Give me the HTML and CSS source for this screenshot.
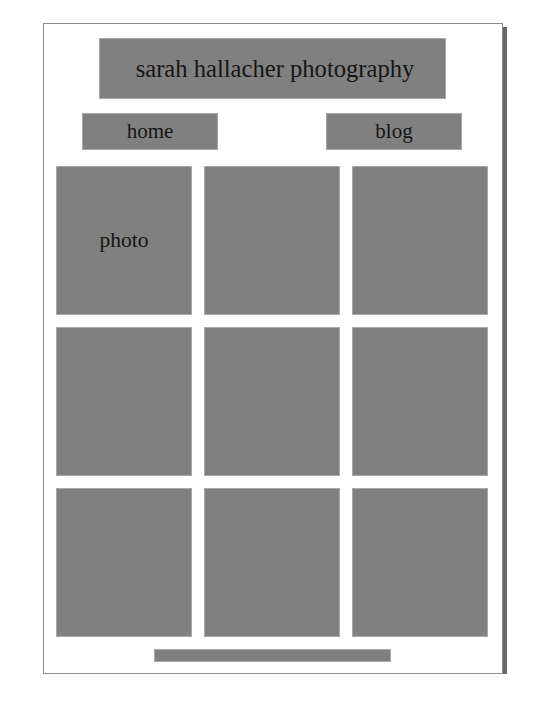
FILE: index.html
```html
<!DOCTYPE html>
<html lang="en">
<head>
<meta charset="utf-8">
<title>sarah hallacher photography</title>
<link rel="stylesheet" href="styles.css">
</head>
<body>
<div class="page">
  <header class="title">sarah hallacher photography</header>
  <nav class="nav">
    <a class="nav-item">home</a>
    <a class="nav-item">blog</a>
  </nav>
  <main class="grid">
    <div class="cell">photo</div>
    <div class="cell"></div>
    <div class="cell"></div>
    <div class="cell"></div>
    <div class="cell"></div>
    <div class="cell"></div>
    <div class="cell"></div>
    <div class="cell"></div>
    <div class="cell"></div>
  </main>
  <footer class="footer"></footer>
</div>
</body>
</html>
```

FILE: styles.css
```css
html, body {
  margin: 0;
  padding: 0;
  background: #ffffff;
}

body {
  padding: 23px 0 0 43px;
  font-family: "Liberation Serif", "Times New Roman", Times, "Nimbus Roman", "DejaVu Serif", serif;
  color: #161616;
}

.title,
.nav-item,
.cell {
  font-family: "Liberation Serif", "Times New Roman", Times, "Nimbus Roman", "DejaVu Serif", serif;
}

.page {
  box-sizing: border-box;
  width: 460px;
  height: 651px;
  border: 1px solid #8c8c8c;
  background: #ffffff;
  box-shadow: 4px 4px 0 #686868;
  display: flex;
  flex-direction: column;
}

.title {
  box-sizing: border-box;
  margin: 14px 0 0 55px;
  width: 347px;
  height: 61px;
  background: #808080;
  border: 1px solid #a9a9a9;
  display: flex;
  align-items: center;
  justify-content: center;
  padding-left: 5px;
  font-size: 24.6px;
}

.nav {
  display: flex;
  justify-content: space-between;
  margin: 14px 40px 0 38px;
}

.nav-item {
  box-sizing: border-box;
  width: 136px;
  height: 37px;
  background: #808080;
  border: 1px solid #a9a9a9;
  display: flex;
  align-items: center;
  justify-content: center;
  font-size: 21px;
  padding-bottom: 1px;
}

.grid {
  display: grid;
  grid-template-columns: repeat(3, 136px);
  grid-auto-rows: 149px;
  column-gap: 12px;
  row-gap: 12px;
  margin: 16px 0 0 12px;
}

.cell {
  box-sizing: border-box;
  background: #808080;
  border: 1px solid #a9a9a9;
  display: flex;
  align-items: center;
  justify-content: center;
  font-size: 21.5px;
  padding-bottom: 1px;
}

.footer {
  box-sizing: border-box;
  margin: 12px 0 0 110px;
  width: 237px;
  height: 13px;
  background: #808080;
  border: 1px solid #a9a9a9;
}
```
